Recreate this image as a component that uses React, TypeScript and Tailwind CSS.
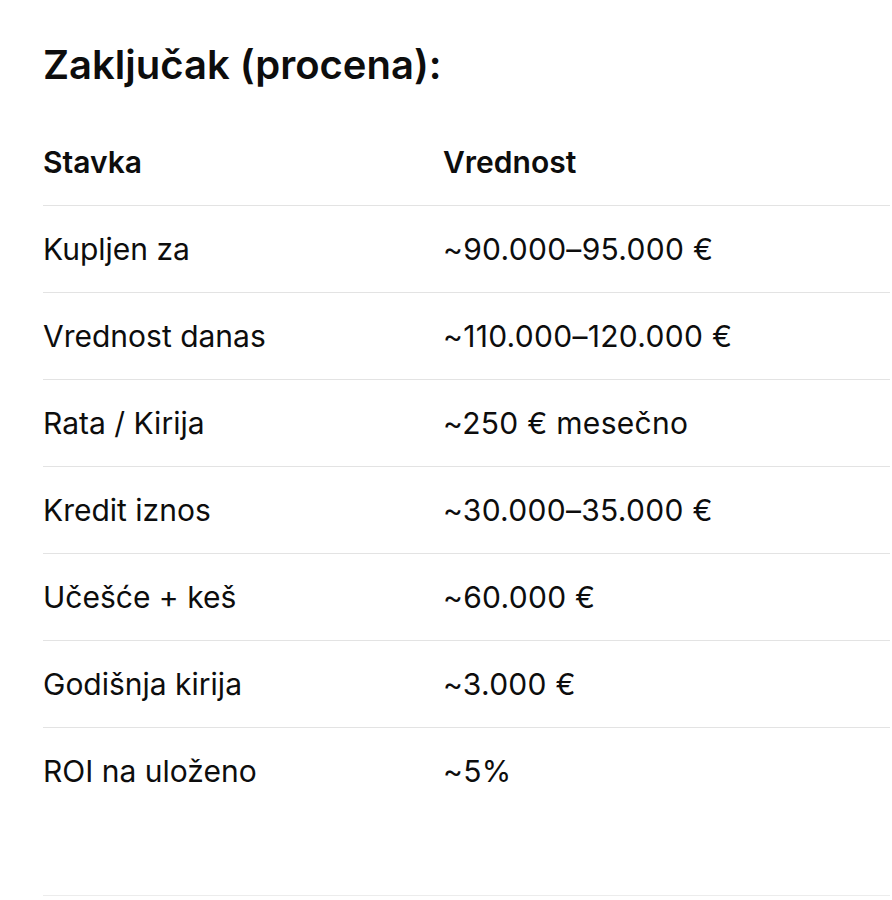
import React from "react";

const rows: [string, string][] = [
  ["Kupljen za", "~90.000–95.000 €"],
  ["Vrednost danas", "~110.000–120.000 €"],
  ["Rata / Kirija", "~250 € mesečno"],
  ["Kredit iznos", "~30.000–35.000 €"],
  ["Učešće + keš", "~60.000 €"],
  ["Godišnja kirija", "~3.000 €"],
  ["ROI na uloženo", "~5%"],
];

export default function App() {
  return (
    <div
      className="w-[892px] h-[900px] bg-white text-[#0d0d0d] overflow-hidden"
      style={{ fontFamily: "Inter, 'Noto Sans', sans-serif" }}
    >
      <div className="pl-[43px] pt-[41px]">
        <h1 className="text-[40px] leading-[48px] font-semibold">Zaključak (procena):</h1>
        <div className="mt-[30px] w-[847px]">
          <div className="flex h-[87px] items-center border-b border-[#e3e3e3] text-[30px] font-semibold">
            <div className="w-[400px]">Stavka</div>
            <div>Vrednost</div>
          </div>
          {rows.map(([a, b], i) => (
            <div
              key={a}
              className={
                i < rows.length - 1
                  ? "flex h-[87px] items-center border-b border-[#e3e3e3] text-[30px]"
                  : "flex h-[87px] items-center text-[30px]"
              }
            >
              <div className="w-[400px]">{a}</div>
              <div className="tracking-[0.3px]">{b}</div>
            </div>
          ))}
          <div className="h-[80px]" />
          <div className="border-b border-[#ececec]" />
        </div>
      </div>
    </div>
  );
}
